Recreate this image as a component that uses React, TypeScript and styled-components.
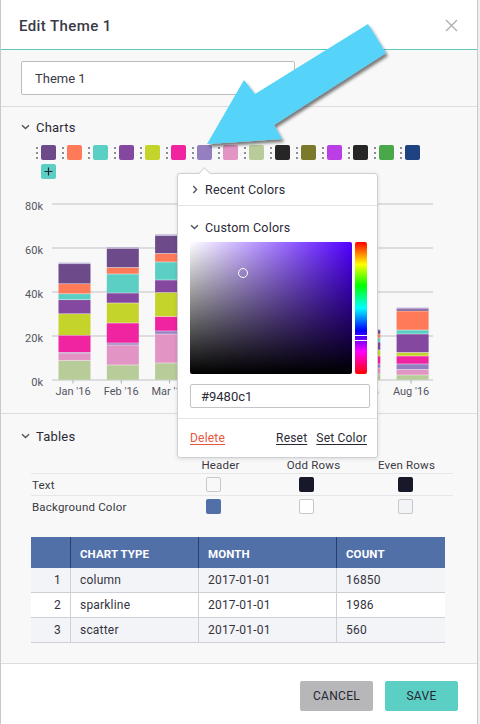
import React from "react";
import styled, { createGlobalStyle } from "styled-components";

const GlobalStyle = createGlobalStyle`
  html, body { margin: 0; padding: 0; background: #eeeef0; }
  body { font-family: Roboto, "Liberation Sans", Arial, sans-serif; color: #33333f; }
  * { box-sizing: border-box; }
`;

const Dialog = styled.div`
  position: relative;
  width: 478px;
  height: 724px;
  background: #f8f8f8;
  border-left: 1px solid #c9c9cd;
  border-right: 1px solid #c9c9cd;
  display: flex;
  flex-direction: column;
  overflow: hidden;
`;

const Header = styled.header`
  flex: none;
  height: 50px;
  background: #fff;
  border-bottom: 1px solid #5fc6bd;
  display: flex;
  align-items: center;
  justify-content: space-between;
  padding: 2px 19px 0 18px;
`;

const Title = styled.h1`
  margin: 0;
  font-size: 15px;
  font-weight: 500;
  letter-spacing: 0.4px;
  color: #3a3a46;
`;

const CloseButton = styled.button`
  border: 0;
  background: none;
  padding: 0;
  width: 13px;
  height: 13px;
  display: flex;
`;

const NameSection = styled.section`
  flex: none;
  padding: 11px 20px;
  border-bottom: 1px solid #dcdde3;
`;

const NameInput = styled.input`
  display: block;
  width: 274px;
  height: 34px;
  border: 1px solid #bcbcbc;
  border-radius: 2px;
  background: #fff;
  padding: 0 13px;
  font-family: inherit;
  font-size: 13px;
  color: #3a3a46;
  outline: none;
`;

const ChartsSection = styled.section`
  flex: none;
  padding: 12px 20px 13px;
  border-bottom: 1px solid #dcdde3;
`;

const TablesSection = styled.section`
  flex: 1;
  padding: 14px 20px 0;
`;

const SectionHead = styled.div`
  display: flex;
  align-items: center;
  gap: 6px;
  height: 16px;
  font-size: 13px;
  color: #2a2a36;
  letter-spacing: 0.2px;
`;

const ChevronBox = styled.span`
  width: 9px;
  height: 9px;
  display: flex;
  align-items: center;
  justify-content: center;
`;

const Chevron = ({ dir }: { dir: "down" | "right" }) => (
  <ChevronBox>
    {dir === "down" ? (
      <svg width="9" height="6" viewBox="0 0 9 6">
        <path d="M1 1.2L4.5 4.6L8 1.2" fill="none" stroke="#55555f" strokeWidth="1.4" />
      </svg>
    ) : (
      <svg width="6" height="9" viewBox="0 0 6 9">
        <path d="M1.3 1L4.6 4.5L1.3 8" fill="none" stroke="#55555f" strokeWidth="1.4" />
      </svg>
    )}
  </ChevronBox>
);

const SwatchList = styled.div`
  display: flex;
  flex-wrap: wrap;
  row-gap: 4px;
  width: 400px;
  margin: 10px 0 0 15px;
`;

const SwatchItem = styled.div`
  display: flex;
  align-items: center;
  gap: 3px;
  margin-right: 6px;
  height: 15px;
`;

const Dots = styled.span`
  display: flex;
  flex-direction: column;
  gap: 3px;
  width: 2px;
  & > i {
    display: block;
    width: 2px;
    height: 2px;
    border-radius: 1px;
    background: #6a6a74;
  }
`;

const Swatch = styled.span<{ $color: string; $bordered?: boolean }>`
  display: block;
  width: 15px;
  height: 15px;
  border-radius: 2px;
  background: ${(p) => p.$color};
  border: ${(p) => (p.$bordered ? "1px solid #c8c8cc" : "none")};
`;

const AddButton = styled.button`
  margin-left: 5px;
  width: 15px;
  height: 15px;
  border: 0;
  border-radius: 2px;
  background: #5ccfc4;
  padding: 0;
  display: flex;
  align-items: center;
  justify-content: center;
`;

const ChartSvg = styled.svg`
  display: block;
  margin: 11px 0 0 -20px;
  font-family: Roboto, "Liberation Sans", Arial, sans-serif;
`;

const Popup = styled.div`
  position: absolute;
  left: 176px;
  top: 173px;
  width: 201px;
  height: 285px;
  background: #fff;
  border: 1px solid #cfd0d6;
  border-radius: 3px;
  box-shadow: 0 1px 4px rgba(0, 0, 0, 0.12);
  display: flex;
  flex-direction: column;
  z-index: 5;
`;

const Caret = styled.span`
  position: absolute;
  left: 22px;
  top: -5px;
  width: 9px;
  height: 9px;
  background: #fff;
  border-top: 1px solid #cfd0d6;
  border-left: 1px solid #cfd0d6;
  transform: rotate(45deg);
`;

const PopRow = styled.div`
  height: 32px;
  display: flex;
  align-items: center;
  gap: 6px;
  padding: 0 0 0 12px;
  border-bottom: 1px solid #e3e4e8;
  font-size: 12.5px;
  color: #2a2a36;
  letter-spacing: 0.2px;
`;

const PopBody = styled.div`
  padding: 13px 7px 10px 12px;
  border-bottom: 1px solid #e3e4e8;
`;

const PopTitle = styled.div`
  height: 16px;
  display: flex;
  align-items: center;
  gap: 6px;
  font-size: 12.5px;
  color: #2a2a36;
  letter-spacing: 0.2px;
`;

const PickerRow = styled.div`
  display: flex;
  gap: 3px;
  margin-top: 7px;
`;

const SatArea = styled.div<{ $hue: number }>`
  position: relative;
  width: 162px;
  height: 132px;
  border-radius: 2px;
  background: linear-gradient(to top, #000, rgba(0, 0, 0, 0)),
    linear-gradient(to right, #fff, hsl(${(p) => p.$hue}, 100%, 50%));
`;

const SatCursor = styled.span`
  position: absolute;
  left: 48px;
  top: 26px;
  width: 10px;
  height: 10px;
  border-radius: 50%;
  border: 1.3px solid #fff;
`;

const HueBar = styled.div`
  position: relative;
  width: 12px;
  height: 132px;
  border-radius: 2px;
  background: linear-gradient(to bottom, #f00, #ff0 17%, #0f0 33%, #0ff 50%, #00f 67%, #f0f 83%, #f00);
`;

const HueHandle = styled.span`
  position: absolute;
  left: 0;
  right: 0;
  top: 93px;
  height: 6px;
  border-top: 1px solid #fff;
  border-bottom: 1px solid #fff;
`;

const HexInput = styled.input`
  display: block;
  width: 180px;
  height: 24px;
  margin-top: 10px;
  border: 1px solid #c4c4c8;
  border-radius: 2px;
  padding: 0 10px;
  font-family: inherit;
  font-size: 13px;
  color: #2a2a36;
  outline: none;
`;

const PopFooter = styled.div`
  flex: 1;
  display: flex;
  align-items: center;
  padding: 0 10px 0 12px;
  gap: 9px;
  font-size: 12px;
  letter-spacing: 0.2px;
`;

const LinkButton = styled.a<{ $danger?: boolean }>`
  color: ${(p) => (p.$danger ? "#e8553d" : "#2a2a36")};
  text-decoration: underline;
  text-underline-offset: 2px;
  margin-right: ${(p) => (p.$danger ? "auto" : "0")};
  cursor: pointer;
`;

const ConfigGrid = styled.div`
  width: 422px;
  margin: 12px 0 0 10px;
`;

const ConfigLine = styled.div<{ $ruled?: boolean }>`
  display: grid;
  grid-template-columns: 143px repeat(3, 93px);
  align-items: center;
  height: ${(p) => (p.$ruled ? 22 : 17)}px;
  border-top: ${(p) => (p.$ruled ? "1px solid #e6e7eb" : "none")};
  font-size: 11.5px;
  color: #3a3a44;
  letter-spacing: 0.2px;
`;

const ColLabel = styled.span`
  text-align: center;
`;

const RowLabel = styled.span`
  padding-left: 1px;
`;

const SwatchCell = styled.span<{ $shift: number }>`
  justify-self: center;
  margin-right: ${(p) => p.$shift}px;
`;

const Preview = styled.table`
  width: 414px;
  margin: 20px 0 0 10px;
  border-spacing: 0;
  table-layout: fixed;
  font-size: 12px;
  color: #33333f;
`;

const Th = styled.th<{ $first?: boolean }>`
  box-sizing: content-box;
  height: 29px;
  padding: 2px 9px 0;
  background: #5270a8;
  color: #fff;
  font-weight: 700;
  font-size: 11.5px;
  text-align: left;
  letter-spacing: 0.1px;
  border-left: ${(p) => (p.$first ? "none" : "1px solid #24406f")};
`;

const Tr = styled.tr<{ $alt?: boolean }>`
  background: ${(p) => (p.$alt ? "#f3f4f7" : "#fff")};
`;

const Td = styled.td<{ $num?: boolean }>`
  box-sizing: content-box;
  height: 24px;
  padding: 0 9px;
  border-bottom: 1px solid #cfd0d4;
  border-left: ${(p) => (p.$num ? "none" : "1px solid #cfd0d4")};
  text-align: ${(p) => (p.$num ? "right" : "left")};
  letter-spacing: 0.2px;
`;

const Footer = styled.footer`
  flex: none;
  height: 61px;
  background: #fff;
  border-top: 1px solid #dcdde3;
  display: flex;
  align-items: center;
  justify-content: flex-end;
  gap: 12px;
  padding: 3px 19px 0 0;
`;

const Button = styled.button<{ $primary?: boolean }>`
  width: 73px;
  height: 30px;
  border: 0;
  border-radius: 2px;
  background: ${(p) => (p.$primary ? "#5ccfc4" : "#b7b7b9")};
  color: #262634;
  font-family: inherit;
  font-size: 12px;
  letter-spacing: 0.3px;
  text-transform: uppercase;
`;

const ArrowLayer = styled.svg`
  position: absolute;
  left: -1px;
  top: 0;
  z-index: 10;
  pointer-events: none;
`;

const palette = [
  "#6d4a8a", "#ff7a59", "#5ccfc4", "#8548a0", "#c5d42a", "#f023a0", "#9480c1", "#e294c4",
  "#b7cc98", "#262626", "#7b7a2a", "#bb3fe6", "#262626", "#4aa84a", "#1f4280",
];

const seriesColors = ["#b7cc98", "#e294c4", "#9480c1", "#f023a0", "#c5d42a", "#8548a0", "#5ccfc4", "#ff7a59", "#6d4a8a", "#a08cc8"];

const bars: { label: string; segs: number[] }[] = [
  { label: "Jan '16", segs: [19.5, 7.5, 0.7, 17, 21.5, 14, 6, 10, 20, 1.3] },
  { label: "Feb '16", segs: [15, 20, 2, 20, 20, 10, 19, 6.5, 19, 1.2] },
  { label: "Mar '16", segs: [17, 29, 3, 14.5, 24, 12.5, 18, 8.5, 18, 1.2] },
  { label: "Apr '16", segs: [16, 20, 3, 15, 20, 12, 14, 8, 16, 1] },
  { label: "May '16", segs: [14, 18, 3, 14, 18, 12, 12, 7, 14, 1] },
  { label: "Jun '16", segs: [12, 14, 3, 12, 14, 10, 10, 6, 12, 1] },
  { label: "Jul '16", segs: [6, 6, 4, 8, 6, 8, 4, 4, 4, 1] },
  { label: "Aug '16", segs: [5, 5.5, 5.5, 8, 3.5, 18.5, 4, 19, 2, 1.5] },
];

const Chart = () => {
  const base = 380;
  const grid = [0, 20, 40, 60, 80];
  return (
    <ChartSvg width={456} height={210} viewBox="1 190 456 210">
      {grid.map((v) => {
        const y = base - v * 2.2;
        return (
          <g key={v}>
            <line x1={52} x2={433} y1={y} y2={y} stroke="#c2c2c6" strokeWidth={1} />
            <text x={43} y={y + 5.5} fontSize={11} fill="#55555f" textAnchor="end">{`${v}k`}</text>
          </g>
        );
      })}
      {bars.map((b, i) => {
        const c = 73 + i * 48.3;
        let y = base;
        return (
          <g key={b.label}>
            {b.segs.map((h, j) => {
              y -= h;
              return <rect key={j} x={c - 14.5} y={y + 0.25} width={32} height={Math.max(h - 0.5, 0.5)} fill={seriesColors[j]} />;
            })}
            <line x1={c} x2={c} y1={base} y2={base + 3.5} stroke="#b0b0b4" />
            <text x={c} y={395} fontSize={11} fill="#55555f" textAnchor="middle">{b.label}</text>
          </g>
        );
      })}
    </ChartSvg>
  );
};

export default function App() {
  return (
    <>
      <GlobalStyle />
      <Dialog>
        <Header>
          <Title>Edit Theme 1</Title>
          <CloseButton aria-label="Close">
            <svg width="13" height="13" viewBox="0 0 13 13">
              <path d="M1 1L12 12M12 1L1 12" stroke="#b0b0b4" strokeWidth="1.4" />
            </svg>
          </CloseButton>
        </Header>

        <NameSection>
          <NameInput defaultValue="Theme 1" />
        </NameSection>

        <ChartsSection>
          <SectionHead>
            <Chevron dir="down" />
            Charts
          </SectionHead>
          <SwatchList>
            {palette.map((c, i) => (
              <SwatchItem key={i}>
                <Dots>
                  <i />
                  <i />
                  <i />
                </Dots>
                <Swatch $color={c} />
              </SwatchItem>
            ))}
            <AddButton aria-label="Add color">
              <svg width="9" height="9" viewBox="0 0 9 9">
                <path d="M4.5 0.5V8.5M0.5 4.5H8.5" stroke="#1f2430" strokeWidth="1.2" />
              </svg>
            </AddButton>
          </SwatchList>
          <Chart />
        </ChartsSection>

        <TablesSection>
          <SectionHead>
            <Chevron dir="down" />
            Tables
          </SectionHead>
          <ConfigGrid>
            <ConfigLine>
              <span />
              <ColLabel>Header</ColLabel>
              <ColLabel>Odd Rows</ColLabel>
              <ColLabel>Even Rows</ColLabel>
            </ConfigLine>
            <ConfigLine $ruled>
              <RowLabel>Text</RowLabel>
              <SwatchCell $shift={15}><Swatch $color="#f8f8f8" $bordered /></SwatchCell>
              <SwatchCell $shift={15}><Swatch $color="#17182a" /></SwatchCell>
              <SwatchCell $shift={3}><Swatch $color="#17182a" /></SwatchCell>
            </ConfigLine>
            <ConfigLine $ruled>
              <RowLabel>Background Color</RowLabel>
              <SwatchCell $shift={15}><Swatch $color="#5270a8" /></SwatchCell>
              <SwatchCell $shift={15}><Swatch $color="#ffffff" $bordered /></SwatchCell>
              <SwatchCell $shift={3}><Swatch $color="#f3f4f7" $bordered /></SwatchCell>
            </ConfigLine>
          </ConfigGrid>

          <Preview>
            <colgroup>
              <col style={{ width: 39 }} />
              <col style={{ width: 128 }} />
              <col style={{ width: 138 }} />
              <col style={{ width: 109 }} />
            </colgroup>
            <thead>
              <tr>
                <Th $first />
                <Th>CHART TYPE</Th>
                <Th>MONTH</Th>
                <Th>COUNT</Th>
              </tr>
            </thead>
            <tbody>
              <Tr $alt>
                <Td $num>1</Td>
                <Td>column</Td>
                <Td>2017-01-01</Td>
                <Td>16850</Td>
              </Tr>
              <Tr>
                <Td $num>2</Td>
                <Td>sparkline</Td>
                <Td>2017-01-01</Td>
                <Td>1986</Td>
              </Tr>
              <Tr $alt>
                <Td $num>3</Td>
                <Td>scatter</Td>
                <Td>2017-01-01</Td>
                <Td>560</Td>
              </Tr>
            </tbody>
          </Preview>
        </TablesSection>

        <Footer>
          <Button>Cancel</Button>
          <Button $primary>Save</Button>
        </Footer>

        <Popup>
          <Caret />
          <PopRow>
            <Chevron dir="right" />
            Recent Colors
          </PopRow>
          <PopBody>
            <PopTitle>
              <Chevron dir="down" />
              Custom Colors
            </PopTitle>
            <PickerRow>
              <SatArea $hue={259}>
                <SatCursor />
              </SatArea>
              <HueBar>
                <HueHandle />
              </HueBar>
            </PickerRow>
            <HexInput defaultValue="#9480c1" />
          </PopBody>
          <PopFooter>
            <LinkButton $danger>Delete</LinkButton>
            <LinkButton>Reset</LinkButton>
            <LinkButton>Set Color</LinkButton>
          </PopFooter>
        </Popup>

        <ArrowLayer width={480} height={724} viewBox="0 0 480 724">
          <defs>
            <filter id="arrowShadow" x="-20%" y="-20%" width="140%" height="140%">
              <feDropShadow dx="2" dy="3" stdDeviation="1.8" floodColor="#000" floodOpacity="0.5" />
            </filter>
          </defs>
          <polygon
            points="207,144 244,80 255,94 368,24 386,53 274,125 282,139"
            fill="#56d3f9"
            filter="url(#arrowShadow)"
          />
        </ArrowLayer>
      </Dialog>
    </>
  );
}
